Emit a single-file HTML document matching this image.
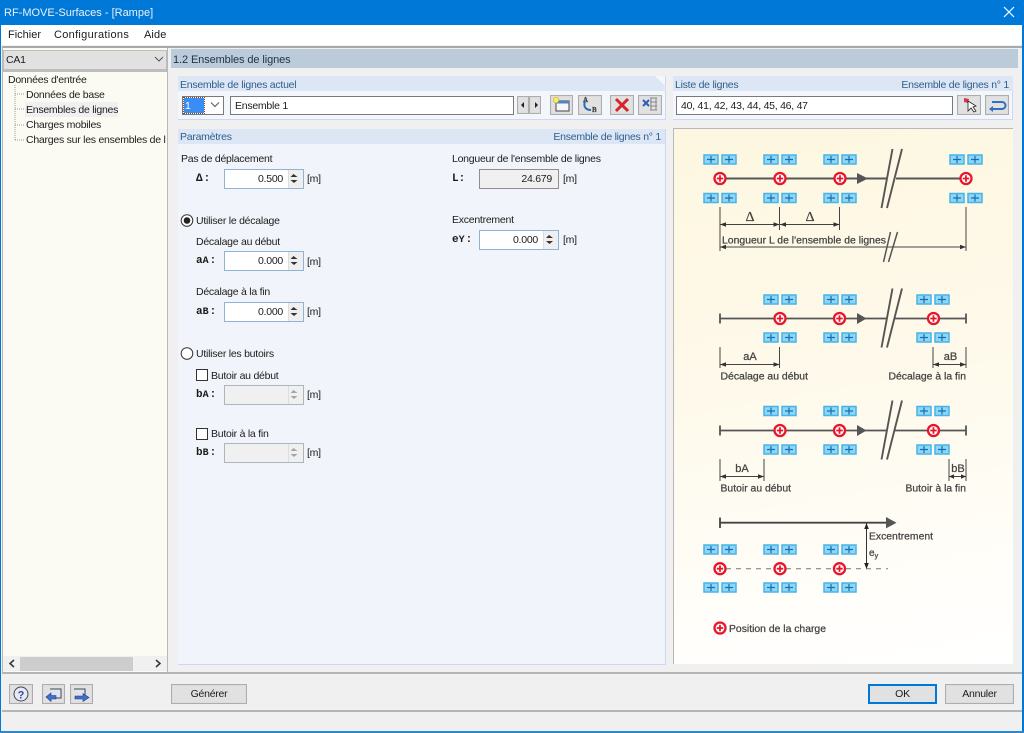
<!DOCTYPE html>
<html lang="fr"><head><meta charset="utf-8"><title>RF-MOVE-Surfaces - [Rampe]</title>
<style>
html,body{margin:0;padding:0;background:#f0f0f0}
#w{position:relative;width:1024px;height:733px;overflow:hidden;background:#f0f0f0;font:10.5px/14px "Liberation Sans",sans-serif;letter-spacing:-.25px;color:#1c1c1c;filter:blur(.35px)}
#w div{position:absolute;box-sizing:border-box}
.t{white-space:nowrap;height:14px;margin-top:1px}
.h{color:#2d5f8d}
.i{background:#fff;border:1px solid #8fb3d4;height:20px;width:80px}
.v{right:20px;top:2px;text-align:right;white-space:nowrap}
.s{right:0;top:0;width:15px;height:18px;background:#efefef;border-left:1px solid #ddd}
.b{background:#e1e1e1;border:1px solid #adadad;box-shadow:inset 0 0 0 1px #dcdcdc;text-align:center;line-height:19px}
.l{font-family:"Liberation Mono",monospace;font-weight:bold;font-size:11px;letter-spacing:0}
.l small{font-size:10px}
.l i{font-style:normal;margin-left:1px}
.dis{background:#f0f0f0;border-color:#adb5bd}
svg{position:absolute;left:0;top:0}
svg text{font-family:"Liberation Sans",sans-serif;font-size:10px;fill:#444;stroke:#444;stroke-width:.25px;letter-spacing:0}
</style></head><body><div id="w">
<div style="left:0;top:0;width:1024px;height:25px;background:#0078d7"></div>
<div class="t" style="left:4px;top:5px;color:#e8f2fb;font-size:11px;letter-spacing:0">RF-MOVE-Surfaces - [Rampe]</div>
<div style="left:0;top:25px;width:1024px;height:20px;background:#fff"></div>
<div class="t" style="left:8px;top:27px;font-size:11px;letter-spacing:0">Fichier</div>
<div class="t" style="left:54px;top:27px;font-size:11px;letter-spacing:.3px">Configurations</div>
<div class="t" style="left:144px;top:27px;font-size:11px;letter-spacing:.1px">Aide</div>
<div style="left:0;top:0;width:1px;height:733px;background:#0078d7"></div>
<div style="right:0;top:0;width:2px;height:733px;background:#0078d7"></div>
<div style="left:0;bottom:0;width:1024px;height:2px;background:#2f86c8"></div>
<div style="left:2px;top:46px;width:1020px;height:2px;background:#a9a9a9"></div>

<div style="left:2px;top:48px;width:166px;height:625px;border:1px solid #b8b8b8;border-top:0;background:#fcfbf3"></div>
<div style="left:3px;top:50px;width:164px;height:20px;background:#e1e1e1;border:1px solid #bdbdbd"></div>
<div class="t" style="left:6px;top:52px">CA1</div>
<div style="left:3px;top:70px;width:164px;height:2px;background:#bdbdbd"></div>
<div style="left:25px;top:102px;width:93px;height:15px;background:#f0f0f0"></div>
<div class="t" style="left:8px;top:72px">Données d'entrée</div>
<div class="t" style="left:26px;top:87px">Données de base</div>
<div class="t" style="left:26px;top:102px">Ensembles de lignes</div>
<div class="t" style="left:26px;top:117px">Charges mobiles</div>
<div style="left:26px;top:133px;width:140px;height:14px;overflow:hidden"><span style="white-space:nowrap">Charges sur les ensembles de lignes</span></div>
<div style="left:3px;top:656px;width:164px;height:15px;background:#f0f0f0"></div>
<div style="left:20px;top:657px;width:113px;height:14px;background:#cdcdcd"></div>

<div style="left:171px;top:49px;width:847px;height:19px;background:#bccbd9"></div>
<div class="t" style="left:173px;top:52px;font-size:11px;letter-spacing:-.1px;color:#1c3347">1.2 Ensembles de lignes</div>

<div style="left:178px;top:76px;width:488px;height:44px;background:#f3f6fb;border:1px solid #cdd6f2;border-top:0;border-left:0"></div>
<div style="left:178px;top:76px;width:488px;height:15px;background:#dde6f4;clip-path:polygon(0 0,477px 0,488px 11px,488px 15px,0 15px)"></div>
<div class="t h" style="left:180px;top:77px">Ensemble de lignes actuel</div>
<div style="left:182px;top:96px;width:42px;height:19px;background:#fff;border:1px solid #7a7a7a"></div>
<div style="left:184px;top:98px;width:20px;height:15px;background:#3a8df5;outline:1px dotted #7a4a20"></div>
<div class="t" style="left:185px;top:98px;color:#fff">1</div>
<div style="left:230px;top:96px;width:284px;height:19px;background:#fff;border:1px solid #7a7a7a"></div>
<div class="t" style="left:235px;top:98px">Ensemble 1</div>
<div class="b" style="left:517px;top:96px;width:12px;height:18px"></div>
<div class="b" style="left:529px;top:96px;width:12px;height:18px"></div>
<div class="b" style="left:550px;top:95px;width:23px;height:20px"></div>
<div class="b" style="left:578px;top:95px;width:24px;height:20px"></div>
<div class="b" style="left:610px;top:95px;width:24px;height:20px"></div>
<div class="b" style="left:638px;top:95px;width:24px;height:20px"></div>

<div style="left:178px;top:129px;width:488px;height:536px;background:#f1f4fa;border:1px solid #cdd6f2;border-top:0;border-left:0"></div>
<div style="left:178px;top:129px;width:487px;height:15px;background:#dde6f4"></div>
<div class="t h" style="left:180px;top:129px">Paramètres</div>
<div class="t h" style="right:363px;top:129px">Ensemble de lignes n° 1</div>

<div class="t" style="left:181px;top:151px">Pas de déplacement</div>
<div class="t l" style="left:196px;top:171px">Δ<i>:</i></div>
<div class="i" style="left:224px;top:169px"><div class="v">0.500</div><div class="s"></div></div>
<div class="t" style="left:307px;top:171px">[m]</div>

<div class="t" style="left:196px;top:213px">Utiliser le décalage</div>
<div class="t" style="left:196px;top:234px">Décalage au début</div>
<div class="t l" style="left:196px;top:253px">a<small>A</small><i>:</i></div>
<div class="i" style="left:224px;top:251px"><div class="v">0.000</div><div class="s"></div></div>
<div class="t" style="left:307px;top:254px">[m]</div>
<div class="t" style="left:196px;top:284px">Décalage à la fin</div>
<div class="t l" style="left:196px;top:304px">a<small>B</small><i>:</i></div>
<div class="i" style="left:224px;top:302px"><div class="v">0.000</div><div class="s"></div></div>
<div class="t" style="left:307px;top:304px">[m]</div>

<div class="t" style="left:196px;top:346px">Utiliser les butoirs</div>
<div style="left:196px;top:369px;width:12px;height:12px;background:#fff;border:1px solid #333"></div>
<div class="t" style="left:211px;top:368px">Butoir au début</div>
<div class="t l" style="left:196px;top:387px">b<small>A</small><i>:</i></div>
<div class="i dis" style="left:224px;top:385px"><div class="s" style="background:#f0f0f0"></div></div>
<div class="t" style="left:307px;top:387px">[m]</div>
<div style="left:196px;top:428px;width:12px;height:12px;background:#fff;border:1px solid #333"></div>
<div class="t" style="left:211px;top:426px">Butoir à la fin</div>
<div class="t l" style="left:196px;top:445px">b<small>B</small><i>:</i></div>
<div class="i dis" style="left:224px;top:443px"><div class="s" style="background:#f0f0f0"></div></div>
<div class="t" style="left:307px;top:445px">[m]</div>

<div class="t" style="left:452px;top:151px">Longueur de l'ensemble de lignes</div>
<div class="t l" style="left:452px;top:171px">L<i style="margin-left:0">:</i></div>
<div class="i" style="left:479px;top:169px;background:#f0f0f0;border-color:#8e8e8e"><div class="v" style="right:6px">24.679</div></div>
<div class="t" style="left:563px;top:171px">[m]</div>
<div class="t" style="left:452px;top:212px">Excentrement</div>
<div class="t l" style="left:452px;top:232px">e<small>Y</small><i>:</i></div>
<div class="i" style="left:479px;top:230px"><div class="v">0.000</div><div class="s"></div></div>
<div class="t" style="left:563px;top:232px">[m]</div>

<div style="left:673px;top:76px;width:340px;height:44px;background:#f3f6fb;border:1px solid #cdd6f2;border-top:0;border-left:0"></div>
<div style="left:673px;top:76px;width:340px;height:15px;background:#dde6f4"></div>
<div class="t h" style="left:675px;top:77px">Liste de lignes</div>
<div class="t h" style="right:15px;top:77px">Ensemble de lignes n° 1</div>
<div style="left:676px;top:96px;width:277px;height:19px;background:#fff;border:1px solid #7a7a7a"></div>
<div class="t" style="left:681px;top:98px">40, 41, 42, 43, 44, 45, 46, 47</div>
<div class="b" style="left:957px;top:95px;width:24px;height:20px"></div>
<div class="b" style="left:985px;top:95px;width:24px;height:20px"></div>

<div style="left:673px;top:128px;width:340px;height:536px;border:1px solid #b8b8b8;border-right:0;border-bottom:0;background:linear-gradient(170deg,#fdf7e1 0%,#fef9ea 45%,#fffefa 85%,#fff 100%)"></div>

<div style="left:2px;top:672px;width:1020px;height:2px;background:#b5b5b5"></div>
<div class="b" style="left:9px;top:684px;width:24px;height:20px"></div>
<div class="b" style="left:42px;top:684px;width:23px;height:20px"></div>
<div class="b" style="left:70px;top:684px;width:23px;height:20px"></div>
<div class="b" style="left:171px;top:684px;width:76px;height:20px">Générer</div>
<div class="b" style="left:868px;top:684px;width:69px;height:20px;border:2px solid #0078d7;box-shadow:none;line-height:17px">OK</div>
<div class="b" style="left:945px;top:684px;width:69px;height:20px">Annuler</div>
<div style="left:2px;top:710px;width:1020px;height:2px;background:#b5b5b5"></div>

<svg width="1024" height="733" viewBox="0 0 1024 733">
<defs>
<g id="p"><rect x="-7" y="-4.500" width="14" height="9" fill="#8fd6f6" stroke="#45b4e8" stroke-width="1.500"/><path d="M-4 0H4M0-3.500V3.500" stroke="#1470b0" stroke-width="1.200"/></g>
<g id="c"><circle r="5.500" fill="#fff" stroke="#e8162a" stroke-width="2.300"/><path d="M-3.200 0H3.200M0-3.200V3.200" stroke="#e8162a" stroke-width="1.800"/></g>
<g id="sl"><path d="M0 0L-11 59M9.500 0L-5.500 59" stroke="#555" stroke-width="1.900" fill="none"/></g>
<g id="ss"><path d="M0 0L-7 30M7 0L-2 30" stroke="#555" stroke-width="1.500" fill="none"/></g>
<g id="r4"><use href="#p" x="711"/><use href="#p" x="729"/><use href="#p" x="771"/><use href="#p" x="789"/><use href="#p" x="831"/><use href="#p" x="849"/></g>
<g id="r3"><use href="#p" x="771"/><use href="#p" x="789"/><use href="#p" x="831"/><use href="#p" x="849"/><use href="#p" x="924"/><use href="#p" x="942"/></g>
</defs>

<path d="M1004 7L1014 17M1014 7L1004 17" stroke="#fff" stroke-width="1.200"/>
<path d="M155 57l4 4 4-4" fill="none" stroke="#555" stroke-width="1"/>
<path d="M211 102.500l4 4 4-4" fill="none" stroke="#555" stroke-width="1"/>
<path d="M15 85V140M15 94H25M15 109H25M15 125H25M15 140H25" stroke="#999" stroke-dasharray="1 1" fill="none"/>
<path d="M14 660l-4 3.500 4 3.500M156 660l4 3.500-4 3.500" fill="none" stroke="#333" stroke-width="1.500"/>

<path d="M521 103l3-3v6zM535 100l3 3-3 3z" fill="#222" transform="translate(0 2)"/>

<!-- toolbar -->
<rect x="556" y="101" width="13" height="10" fill="#f5f7fb" stroke="#444"/><rect x="556" y="101" width="13" height="2.500" fill="#4d83c4"/><circle cx="556" cy="100" r="2.800" fill="#f8ee60" stroke="#c9b53a" stroke-width=".7"/>
<path d="M585 101c-2 6 1 9 6 9" fill="none" stroke="#2a6db8" stroke-width="2"/><text x="583" y="102" style="font-family:'Liberation Serif',serif;font-size:7px;font-weight:bold">A</text><text x="592" y="112" style="font-family:'Liberation Serif',serif;font-size:7px;font-weight:bold">B</text>
<path d="M616 99L628 111M628 99L616 111" stroke="#d8232a" stroke-width="3"/>
<path d="M643 100l6 6m0-6l-6 6" stroke="#2a5cc0" stroke-width="2"/><path d="M650 98h7M650 102h7M650 106h7M650 110h7M651 98v12M656 98v12" stroke="#888" fill="none"/>
<path d="M964 98l5 1-1 4-4-1z" fill="#d9344a"/><path d="M968 101l0 10 3-3 3 4 2-1-3-4 3-1z" fill="#fff" stroke="#222" stroke-width=".8"/>
<path d="M992 102h10a3 3 0 0 1 0 7h-12" fill="none" stroke="#2f6fc4" stroke-width="2"/><path d="M993 106l-4 3 4 3" fill="#2f6fc4"/>

<path d="M294 176l-3 3h7zM291 182h7l-3.500 3z" fill="#333" transform="translate(-.5 -2)"/>
<path d="M294 176l-3 3h7zM291 182h7l-3.500 3z" fill="#333" transform="translate(-.5 80)"/>
<path d="M294 176l-3 3h7zM291 182h7l-3.500 3z" fill="#333" transform="translate(-.5 131)"/>
<path d="M294 176l-3 3h7zM291 182h7l-3.500 3z" fill="#a5a5a5" transform="translate(-.5 214)"/>
<path d="M294 176l-3 3h7zM291 182h7l-3.500 3z" fill="#a5a5a5" transform="translate(-.5 272)"/>
<path d="M549 237l-3 3h7zM546 243h7l-3.500 3z" fill="#333" transform="translate(0 -2)"/>

<circle cx="187" cy="220.500" r="5.800" fill="#fff" stroke="#333"/><circle cx="187" cy="220.500" r="3.300" fill="#222"/>
<circle cx="187" cy="353.500" r="5.800" fill="#fff" stroke="#333"/>

<!-- diagram 1 -->
<use href="#r4" y="159.500"/><use href="#p" x="957" y="159.500"/><use href="#p" x="975" y="159.500"/>
<use href="#r4" y="198"/><use href="#p" x="957" y="198"/><use href="#p" x="975" y="198"/>
<path d="M720 178.500H887M896 178.500H966" stroke="#555" stroke-width="2"/>
<path d="M857 173l11 5.500-11 5.500z" fill="#555"/>
<use href="#sl" x="892.500" y="149"/>
<use href="#c" x="720" y="178.500"/><use href="#c" x="780" y="178.500"/><use href="#c" x="840" y="178.500"/><use href="#c" x="966" y="178.500"/>
<path d="M720 207V251M779.500 207V230M839.500 207V230M966 207V251" stroke="#444" stroke-width="1"/>
<path d="M720 224.500H839.500M720 247H966" stroke="#444" stroke-width="1"/>
<path d="M779.500 224.500l-6-2.300v4.600zM780 224.500l6-2.300v4.600zM839.500 224.500l-6-2.300v4.600zM720 224.500l6-2.300v4.600zM720 247l6-2.300v4.600zM966 247l-6-2.300v4.600z" fill="#333"/>
<text x="750" y="221" text-anchor="middle" style="font-family:'Liberation Serif',serif;font-size:14px">Δ</text>
<text x="810" y="221" text-anchor="middle" style="font-family:'Liberation Serif',serif;font-size:14px">Δ</text>
<text x="722" y="243.500" textLength="164" lengthAdjust="spacingAndGlyphs">Longueur L de l'ensemble de lignes</text>
<use href="#ss" x="890.500" y="232"/>

<!-- diagram 2 -->
<use href="#r3" y="299.500"/><use href="#r3" y="337.500"/>
<path d="M720 318.500H887M895 318.500H966M720 313.500V323.500M966 313.500V323.500" stroke="#555" stroke-width="1.800"/>
<path d="M857 313l9.500 5.500-9.500 5.500z" fill="#555"/>
<use href="#sl" x="892.500" y="288.500"/>
<use href="#c" x="780" y="318.500"/><use href="#c" x="839.500" y="318.500"/><use href="#c" x="933.500" y="318.500"/>
<path d="M720 347V368M779.500 347V368M933 347V368M966 347V368M720 364.500H779.500M933 364.500H966" stroke="#444"/>
<path d="M720 364.500l6-2.300v4.600zM779.500 364.500l-6-2.300v4.600zM933 364.500l6-2.300v4.600zM966 364.500l-6-2.300v4.600z" fill="#333"/>
<text x="750" y="360" text-anchor="middle" style="font-size:11px">aA</text>
<text x="950.500" y="360" text-anchor="middle" style="font-size:11px">aB</text>
<text x="720.500" y="379.500" textLength="87.500" lengthAdjust="spacingAndGlyphs">Décalage au début</text>
<text x="888.500" y="379.500" textLength="77.500" lengthAdjust="spacingAndGlyphs">Décalage à la fin</text>

<!-- diagram 3 -->
<use href="#r3" y="411"/><use href="#r3" y="449.500"/>
<path d="M720 430.500H887M895 430.500H966M720 425.500V435.500M966 425.500V435.500" stroke="#555" stroke-width="1.800"/>
<path d="M857 425l9.500 5.500-9.500 5.500z" fill="#555"/>
<use href="#sl" x="892.500" y="400.500"/>
<use href="#c" x="780" y="430.500"/><use href="#c" x="839.500" y="430.500"/><use href="#c" x="933.500" y="430.500"/>
<path d="M720 459V481M764 459V481M949 459V481M966 459V481M720 476.500H764M949 476.500H966" stroke="#444"/>
<path d="M720 476.500l6-2.300v4.600zM764 476.500l-6-2.300v4.600zM949 476.500l5-2.300v4.600zM966 476.500l-5-2.300v4.600z" fill="#333"/>
<text x="742" y="472" text-anchor="middle" style="font-size:11px">bA</text>
<text x="958" y="472" text-anchor="middle" style="font-size:11px">bB</text>
<text x="720.500" y="491.500" textLength="70.500" lengthAdjust="spacingAndGlyphs">Butoir au début</text>
<text x="905.500" y="491.500" textLength="60.500" lengthAdjust="spacingAndGlyphs">Butoir à la fin</text>

<!-- diagram 4 -->
<path d="M720 522.700H887M720 517.500V528" stroke="#444" stroke-width="1.800"/>
<path d="M886 517l10.500 5.700-10.500 5.700z" fill="#555"/>
<path d="M866.500 523V569" stroke="#333"/>
<path d="M866.500 523l-2.300 6h4.600zM866.500 569l-2.300-6h4.600z" fill="#222"/>
<text x="869" y="539.500" textLength="64" lengthAdjust="spacingAndGlyphs">Excentrement</text>
<text x="869" y="556">e<tspan font-size="7" dy="2">y</tspan></text>
<use href="#r4" y="549.500"/><use href="#r4" y="587.500"/>
<path d="M726 568.700H888" stroke="#777" stroke-width="1" stroke-dasharray="5 5"/>
<use href="#c" x="720" y="568.700"/><use href="#c" x="780" y="568.700"/><use href="#c" x="839.500" y="568.700"/>
<use href="#c" x="720" y="628"/>
<text x="729" y="632" textLength="97" lengthAdjust="spacingAndGlyphs">Position de la charge</text>

<!-- bottom icons -->
<circle cx="21" cy="694" r="7" fill="#e9e9f3" stroke="#445"/><text x="21" y="698.500" text-anchor="middle" style="font-size:11px;font-weight:bold;fill:#2a4d9c;stroke:none">?</text>
<path d="M50 689H61V698H55" fill="#dfe6f3" stroke="#445"/><path d="M46 697l5-4v2.500h5v3.500h-5v2.500z" fill="#3f6fd0" stroke="#1e3a80" stroke-width=".6"/>
<path d="M74 689H85V698" fill="#dfe6f3" stroke="#445"/><path d="M75 696h8v-2.500l6 4-6 4v-2.500h-8z" fill="#3f6fd0" stroke="#1e3a80" stroke-width=".6"/>
</svg>
</div></body></html>
